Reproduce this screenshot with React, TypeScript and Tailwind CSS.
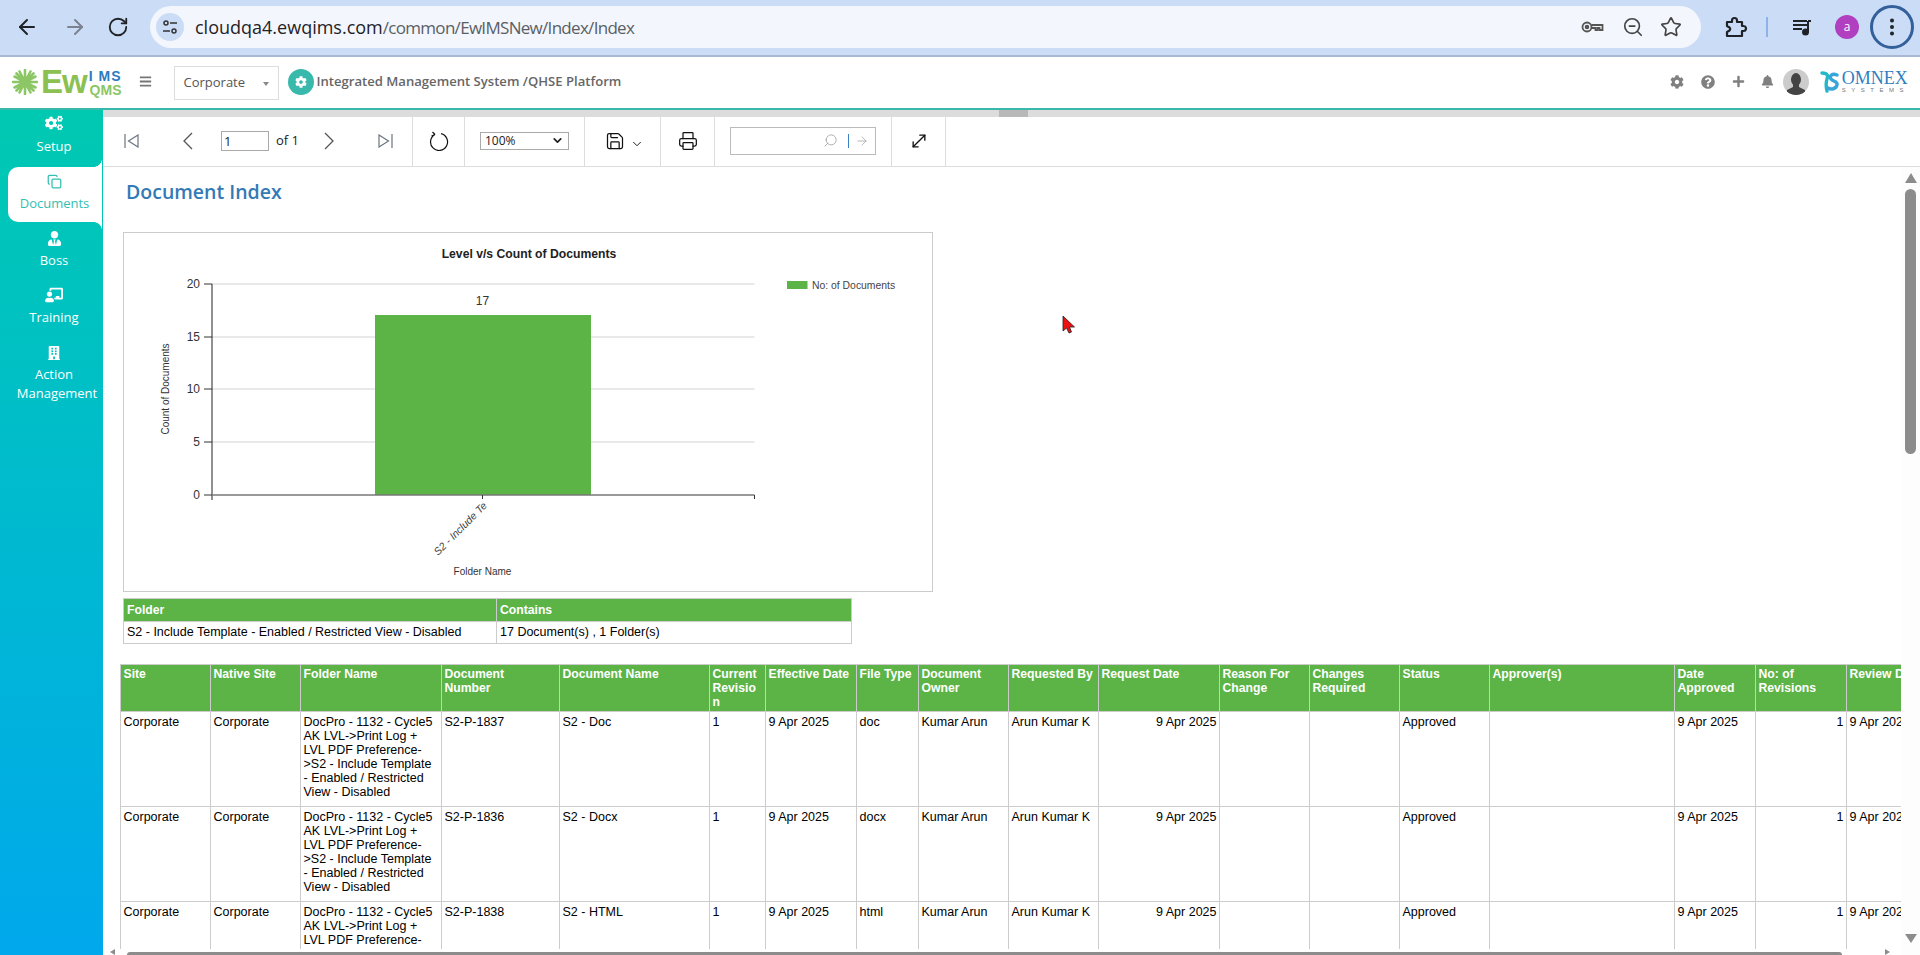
import { ArrowLeft, ArrowRight, ChevronDown, Copy, EllipsisVertical, MoveDiagonal, Printer, RotateCw, Save, Search, Star, ZoomOut } from "lucide-react";
import { FaBars, FaBell, FaBuilding, FaChalkboardTeacher, FaCog, FaCogs, FaPlus, FaQuestionCircle, FaUserTie } from "react-icons/fa";

const folderLines = ["DocPro - 1132 - Cycle5", "AK LVL->Print Log +", "LVL PDF Preference-", ">S2 - Include Template", "- Enabled / Restricted", "View - Disabled"];

const colWidths = [
  "w-[90px]", "w-[90px]", "w-[141px]", "w-[118px]", "w-[150px]", "w-[56px]", "w-[91px]", "w-[62px]", "w-[90px]",
  "w-[90px]", "w-[121px]", "w-[90px]", "w-[90px]", "w-[90px]", "w-[185px]", "w-[81px]", "w-[91px]", "w-[90px]",
];

const headers = [
  ["Site"], ["Native Site"], ["Folder Name"], ["Document", "Number"], ["Document Name"], ["Current", "Revisio", "n"],
  ["Effective Date"], ["File Type"], ["Document", "Owner"], ["Requested By"], ["Request Date"], ["Reason For", "Change"],
  ["Changes", "Required"], ["Status"], ["Approver(s)"], ["Date", "Approved"], ["No: of", "Revisions"], ["Review Date"],
];

const rows = [
  { number: "S2-P-1837", name: "S2 - Doc", type: "doc" },
  { number: "S2-P-1836", name: "S2 - Docx", type: "docx" },
  { number: "S2-P-1838", name: "S2 - HTML", type: "html" },
];

const td = "border border-[#cccccc] px-[2.5px] pt-[3px] align-top whitespace-nowrap overflow-hidden";

function NavItem({ icon, label, second }: { icon: React.ReactNode; label: string; second?: string }) {
  return (
    <div className={`flex h-[57px] flex-col items-center pl-[5px] pt-[6px] text-white ${second ? "mt-1" : ""}`}>
      <div className="flex h-5 items-center">{icon}</div>
      <div className={`text-center leading-[19px] ${second ? "mt-[5px]" : "mt-[3px]"}`}>
        {label}
        {second && <span className="block pl-1.5">{second}</span>}
      </div>
    </div>
  );
}

function Chart() {
  const grid = [284, 337, 389, 442];
  const ticks = [
    { y: 284, label: "20" },
    { y: 337, label: "15" },
    { y: 389, label: "10" },
    { y: 442, label: "5" },
    { y: 495, label: "0" },
  ];
  return (
    <svg viewBox="124 233 808 358" className="h-[358px] w-[808px]" fontFamily="'Liberation Sans', Arial, sans-serif">
      <text x="529" y="258" textAnchor="middle" fontSize="12.2" fontWeight="700" fill="#222">Level v/s Count of Documents</text>
      {grid.map((y) => (
        <line key={y} x1="212" x2="754.5" y1={y} y2={y} stroke="#e2e2e2" strokeWidth="1.4" />
      ))}
      <rect x="375" y="315" width="216" height="180" fill="#5cb346" />
      <line x1="212" x2="212" y1="284" y2="500" stroke="#222" />
      <line x1="212" x2="754.5" y1="495" y2="495" stroke="#777" strokeWidth="1.6" />
      {ticks.map((t) => (
        <g key={t.y}>
          <line x1="204" x2="212" y1={t.y} y2={t.y} stroke="#333" />
          <text x="200" y={t.y + 4} textAnchor="end" fontSize="12" fill="#333">{t.label}</text>
        </g>
      ))}
      <line x1="482.5" x2="482.5" y1="495" y2="499" stroke="#333" />
      <line x1="754.5" x2="754.5" y1="495" y2="499" stroke="#333" />
      <text x="482.5" y="305" textAnchor="middle" fontSize="12" fill="#333">17</text>
      <rect x="787" y="281" width="20.5" height="8" fill="#5cb346" />
      <text x="812" y="289" fontSize="10.4" fill="#444">No: of Documents</text>
      <text transform="translate(169 389) rotate(-90)" textAnchor="middle" fontSize="10" fill="#333">Count of Documents</text>
      <text transform="translate(438 556) rotate(-45)" fontSize="10.5" fontStyle="italic" fill="#444">S2 - Include Te</text>
      <text x="482.5" y="575" textAnchor="middle" fontSize="10" fill="#333">Folder Name</text>
    </svg>
  );
}

export default function App() {
  return (
    <div className="relative flex h-[955px] w-[1920px] flex-col overflow-hidden bg-white font-['Liberation_Sans',Arial,sans-serif]">
      {/* browser chrome */}
      <div className="flex h-[57px] shrink-0 items-start border-b-2 border-[#a9b8d0] bg-[#cbdcf6] pl-[15px] pt-[6px] text-[#1f2328]">
        <div className="flex h-[42px] items-center">
          <ArrowLeft size={24} strokeWidth={2} />
          <ArrowRight size={24} strokeWidth={2} className="ml-6 text-[#7b8391]" />
          <RotateCw size={22} strokeWidth={2} className="ml-[20px]" />
        </div>
        <div className="ml-[21px] flex h-[42px] w-[1551px] items-center rounded-full bg-[#f3f6fc] pl-[6px] pr-[19px]">
          <div className="flex h-7 w-7 items-center justify-center rounded-full bg-[#cbdcf6]">
            <svg width="16" height="16" viewBox="0 0 16 16" fill="none" stroke="#333" strokeWidth="1.5">
              <circle cx="4" cy="4" r="2" />
              <path d="M8 4h7M1 12h7" />
              <circle cx="12" cy="12" r="2" />
            </svg>
          </div>
          <div className="ml-[11px] font-['Open_Sans',sans-serif] text-[18px] text-[#5a5f66]">
            <span className="text-[#1f2328]">cloudqa4.ewqims.com</span>
            <span className="text-[17px] tracking-[-0.7px]">/common/EwIMSNew/Index/Index</span>
          </div>
          <div className="ml-auto flex items-center gap-4 text-[#444]">
            <svg width="24" height="24" viewBox="0 0 24 24" fill="none" stroke="#555" strokeWidth="1.8" className="mr-0.5">
              <circle cx="7" cy="12" r="4.5" />
              <circle cx="7" cy="12" r="1.4" fill="#555" />
              <path d="M11.5 10h11v5h-3v-2h-2v2h-2v-2h-4" />
            </svg>
            <ZoomOut size={22} strokeWidth={1.8} />
            <Star size={22} strokeWidth={1.8} />
          </div>
        </div>
        <div className="flex h-[42px] items-center">
          <svg width="24" height="24" viewBox="0 0 24 24" fill="none" stroke="#1f2328" strokeWidth="2.2" strokeLinejoin="round" className="ml-[22px]">
            <path d="M4 7h5V5.500a2.500 2.500 0 0 1 5 0V7h5v4h1.500a2.500 2.500 0 0 1 0 5H19v5H4v-4l2.500-1.500a2 2 0 0 0 0-3L4 11z" />
          </svg>
          <div className="ml-[19px] h-5 w-0.5 bg-[#8fb3e8]" />
          <svg width="24" height="24" viewBox="0 0 24 24" fill="none" stroke="#1f2328" strokeWidth="2" className="ml-[22px]">
            <path d="M3 6h14M3 10h14M3 14h9" />
            <path d="M18 6v11" />
            <path d="M18 6h3" />
            <circle cx="15.5" cy="17" r="2.5" fill="#1f2328" />
          </svg>
          <div className="ml-[21px] flex h-6 w-6 items-center justify-center rounded-full bg-[#b040c0] font-['Open_Sans',sans-serif] text-xs text-white">a</div>
          <div className="ml-[11px] flex h-11 w-11 items-center justify-center rounded-full border-[3px] border-[#33609b]">
            <EllipsisVertical size={22} strokeWidth={2.4} />
          </div>
        </div>
      </div>

      {/* app header */}
      <div className="flex h-[53px] shrink-0 items-center border-b-2 border-[#39b9ab] pb-0.5 pl-3 pr-[11px]">
        <svg width="26" height="26" viewBox="0 0 26 26" stroke="#8cc665" strokeWidth="2.6" strokeLinecap="round">
          <path d="M13 1v24M1 13h24M4.5 4.5l17 17M21.5 4.500l-17 17M7.500 2.500l11 21M18.500 2.500l-11 21M2.500 7.500l21 11M23.500 7.500l-21 11" />
        </svg>
        <div className="ml-[3px] flex items-end">
          <span className="text-[33px] font-bold leading-[30px] tracking-[-1px] text-[#8cc152]">Ew</span>
          <div className="ml-0.5 flex flex-col items-end">
            <span className="text-[14px] font-bold leading-[14px] tracking-[1px] text-[#2b7cc0]">I MS</span>
            <span className="text-[14px] font-bold leading-[14px] text-[#8cc665]">QMS</span>
          </div>
        </div>
        <FaBars size={13} className="ml-[18px] text-[#777]" />
        <div className="relative ml-[22px] mt-[3px] flex h-[34px] w-[105px] items-center border border-[#dddddd] pl-2 font-['Open_Sans',sans-serif] text-[13px] text-[#555]">
          Corporate
          <span className="absolute right-[9px] top-[15px] border-x-[3.5px] border-t-[4px] border-x-transparent border-t-[#888]" />
        </div>
        <div className="ml-[9px] flex h-[26px] w-[26px] items-center justify-center rounded-full bg-[#39b9ab]">
          <FaCog size={12} className="text-white" />
        </div>
        <div className="ml-0.5 font-['Open_Sans',sans-serif] text-[13.1px] font-semibold text-[#666]">Integrated Management System /QHSE Platform</div>
        <div className="ml-auto flex items-center text-[#808080]">
          <FaCog size={14} />
          <FaQuestionCircle size={14} className="ml-[17px]" />
          <FaPlus size={13} className="ml-[17px]" />
          <FaBell size={13} className="ml-4" />
          <div className="ml-[9px] flex h-[26px] w-[26px] items-end justify-center overflow-hidden rounded-full bg-[#cccccc]">
            <svg width="22" height="23" viewBox="0 0 22 23" fill="#444">
              <ellipse cx="11" cy="7.5" rx="5" ry="6.5" />
              <path d="M8 12h6v3l6 3v5H2v-5l6-3z" />
            </svg>
          </div>
          <div className="ml-2.5 flex items-center">
            <svg width="20" height="22" viewBox="0 0 20 22" fill="none" strokeWidth="3.4" strokeLinecap="round">
              <path d="M3 2c6 0 6 3 5 6s-1 8 0 12" stroke="#22b8c8" />
              <path d="M18 4c-5-2-8 1-6 4s7 2 6 6-6 5-9 3" stroke="#3aa5d8" />
            </svg>
            <div className="ml-[3px] flex flex-col items-start font-['Liberation_Serif',serif]">
              <span className="text-[18px] leading-[16px] text-[#2f7fc1]">OMNEX</span>
              <span className="font-['Liberation_Sans',sans-serif] text-[6px] leading-[8px] tracking-[5.5px] text-[#777]">SYSTEMS</span>
            </div>
          </div>
        </div>
      </div>

      <div className="flex min-h-0 flex-1">
        {/* sidebar */}
        <aside className="w-[103px] shrink-0 bg-gradient-to-b from-[#00c9b1] to-[#00a8ec] font-['Open_Sans',sans-serif] text-[13px]">
          <div className="flex h-[57px] flex-col items-center pl-[5px] pt-[3px] text-white">
            <div className="flex h-5 items-center"><FaCogs size={18} /></div>
            <div className="mt-1 leading-[19px]">Setup</div>
          </div>
          <div className="relative ml-2 mr-px flex h-[55px] flex-col items-center rounded-l-[10px] bg-white pr-px pt-1 text-[#33c0b0]">
            <span className="absolute -top-2 right-0 h-2 w-2 bg-[radial-gradient(circle_at_0_0,transparent_7.5px,white_8px)]" />
            <span className="absolute -bottom-2 right-0 h-2 w-2 bg-[radial-gradient(circle_at_0_100%,transparent_7.5px,white_8px)]" />
            <div className="flex h-5 items-center"><Copy size={15} /></div>
            <div className="mt-[3px] leading-[19px]">Documents</div>
          </div>
          <NavItem icon={<FaUserTie size={15} />} label="Boss" />
          <NavItem icon={<FaChalkboardTeacher size={18} />} label="Training" />
          <NavItem icon={<FaBuilding size={14} />} label="Action" second="Management" />
        </aside>

        <main className="flex min-w-0 flex-1 flex-col">
          <div className="relative h-[7px] shrink-0 bg-[#dcdcdc]">
            <div className="absolute left-[896px] top-0 h-[7px] w-[29px] bg-[#b8b8b8]" />
          </div>

          {/* report toolbar */}
          <div className="flex h-[50px] shrink-0 border-b border-[#dddddd] font-['Open_Sans',sans-serif] text-[13px] text-[#222]">
            <div className="flex w-[310px] items-center border-r border-[#dddddd] pb-0.5 pl-[21px]">
              <svg width="15" height="14" viewBox="0 0 15 14" fill="none" stroke="#6b7480" strokeWidth="1.2">
                <path d="M1 0v14M14 1v12L4.500 7z" />
              </svg>
              <svg width="11" height="18" viewBox="0 0 11 18" fill="none" stroke="#555" strokeWidth="1.3" className="ml-[43px]">
                <path d="M10 1 2 9l8 8" />
              </svg>
              <input readOnly value="1" className="ml-7 h-5 w-12 border border-[#aaaaaa] pl-0.5 text-[13px] leading-none outline-none" />
              <span className="ml-[7px]">of 1</span>
              <svg width="11" height="18" viewBox="0 0 11 18" fill="none" stroke="#555" strokeWidth="1.3" className="ml-[25px]">
                <path d="m1 1 8 8-8 8" />
              </svg>
              <svg width="15" height="14" viewBox="0 0 15 14" fill="none" stroke="#6b7480" strokeWidth="1.2" className="ml-[43px]">
                <path d="M14 0v14M1 1v12l9.500-6z" />
              </svg>
            </div>
            <div className="flex w-[52px] items-center justify-center border-r border-[#dddddd] pb-0.5">
              <svg width="20" height="20" viewBox="0 0 20 20" fill="none" stroke="#111" strokeWidth="1.2">
                <path d="M6 3.500a8.500 8.500 0 1 0 6-.8M6 3.500 3.500 1M6 3.500l-3.500 1.500" />
              </svg>
            </div>
            <div className="flex w-[120px] items-center border-r border-[#dddddd] pb-0.5 pl-[15px]">
              <div className="flex h-[18px] w-[89px] items-center justify-between border border-[#aaaaaa] px-1 text-xs">
                100%
                <ChevronDown size={13} strokeWidth={3.2} />
              </div>
            </div>
            <div className="flex w-[76px] items-center border-r border-[#dddddd] pb-0.5 pl-5">
              <Save size={20} strokeWidth={1.5} className="text-[#111]" />
              <ChevronDown size={14} strokeWidth={1.6} className="ml-[5px] mt-1.5 text-[#111]" />
            </div>
            <div className="flex w-[54px] items-center justify-center border-r border-[#dddddd] pb-0.5">
              <Printer size={20} strokeWidth={1.5} className="text-[#111]" />
            </div>
            <div className="flex w-[177px] items-center border-r border-[#dddddd] pb-0.5 pl-[15px]">
              <div className="flex h-7 w-[146px] items-center justify-end border border-[#bbbbbb] pr-1.5">
                <Search size={15} strokeWidth={1.2} className="-scale-x-100 text-[#999]" />
                <div className="ml-[10px] h-3.5 w-px bg-[#3b82c4]" />
                <ArrowRight size={14} strokeWidth={1.2} className="ml-1.5 text-[#999]" />
              </div>
            </div>
            <div className="flex w-[54px] items-center justify-center border-r border-[#dddddd] pb-0.5">
              <MoveDiagonal size={20} strokeWidth={1.6} className="text-[#111]" />
            </div>
          </div>

          {/* report body */}
          <div className="flex min-h-0 flex-1">
            <div className="flex min-w-0 flex-1 flex-col">
              <div className="min-h-0 flex-1 overflow-hidden text-[12.5px] leading-[14px] text-black">
                <h1 className="ml-[23px] mt-[11px] font-['Open_Sans',sans-serif] text-[19.5px] font-semibold leading-[28px] text-[#337ab7]">Document Index</h1>
                <div className="ml-5 mt-[26px] h-[360px] w-[810px] border border-[#cccccc]">
                  <Chart />
                </div>
                <table className="ml-5 mt-[6px] w-[728px] table-fixed border-collapse">
                  <colgroup>
                    <col className="w-[373px]" />
                    <col className="w-[355px]" />
                  </colgroup>
                  <thead>
                    <tr className="h-[23px] bg-[#5cb346] text-left text-white">
                      <th className="border border-[#cccccc] px-[3px] text-[12.2px] font-bold">Folder</th>
                      <th className="border border-[#cccccc] px-[3px] text-[12.2px] font-bold">Contains</th>
                    </tr>
                  </thead>
                  <tbody>
                    <tr className="h-[22px]">
                      <td className="border border-[#cccccc] px-[3px] pb-0.5">S2 - Include Template - Enabled / Restricted View - Disabled</td>
                      <td className="border border-[#cccccc] px-[3px] pb-0.5">17 Document(s) , 1 Folder(s)</td>
                    </tr>
                  </tbody>
                </table>
                <table className="ml-[17px] mt-5 w-[1816px] table-fixed border-collapse">
                  <colgroup>
                    {colWidths.map((w, i) => (
                      <col key={i} className={w} />
                    ))}
                  </colgroup>
                  <thead>
                    <tr className="h-[47px] bg-[#5cb346] text-left text-white">
                      {headers.map((lines, i) => (
                        <th key={i} className="overflow-hidden whitespace-nowrap border border-[#cccccc] px-[2.5px] pt-0.5 align-top text-[12.2px] font-bold">
                          {lines.map((l) => (
                            <div key={l}>{l}</div>
                          ))}
                        </th>
                      ))}
                    </tr>
                  </thead>
                  <tbody>
                    {rows.map((r) => (
                      <tr key={r.number} className="h-[95px]">
                        <td className={td}>Corporate</td>
                        <td className={td}>Corporate</td>
                        <td className={td}>
                          {folderLines.map((l) => (
                            <div key={l}>{l}</div>
                          ))}
                        </td>
                        <td className={td}>{r.number}</td>
                        <td className={td}>{r.name}</td>
                        <td className={td}>1</td>
                        <td className={td}>9 Apr 2025</td>
                        <td className={td}>{r.type}</td>
                        <td className={td}>Kumar Arun</td>
                        <td className={td}>Arun Kumar K</td>
                        <td className={`${td} text-right`}>9 Apr 2025</td>
                        <td className={td} />
                        <td className={td} />
                        <td className={td}>Approved</td>
                        <td className={td} />
                        <td className={td}>9 Apr 2025</td>
                        <td className={`${td} text-right`}>1</td>
                        <td className={td}>9 Apr 2025</td>
                      </tr>
                    ))}
                  </tbody>
                </table>
              </div>
              {/* horizontal scrollbar */}
              <div className="flex h-[6px] shrink-0 items-end">
                <div className="ml-[7px] h-0 w-0 border-y-[3px] border-r-[5px] border-y-transparent border-r-[#8c8c8c]" />
                <div className="ml-3 h-[3px] w-[1715px] rounded-t-sm bg-[#8c8c8c]" />
                <div className="ml-[43px] h-0 w-0 border-y-[3px] border-l-[5px] border-y-transparent border-l-[#8c8c8c]" />
              </div>
            </div>
            {/* vertical scrollbar */}
            <div className="flex w-[19px] shrink-0 flex-col items-center bg-[#fdfdfd] px-[3px] pt-[6px]">
              <div className="h-0 w-0 border-x-[6.5px] border-b-[10px] border-x-transparent border-b-[#8c8c8c]" />
              <div className="mt-[6px] h-[265px] w-[11px] rounded-full bg-[#8c8c8c]" />
              <div className="mb-[12px] mt-auto h-0 w-0 border-x-[6.5px] border-t-[9px] border-x-transparent border-t-[#8c8c8c]" />
            </div>
          </div>
        </main>
      </div>

      {/* screen recorder cursor */}
      <svg width="14" height="20" viewBox="0 0 14 20" className="pointer-events-none absolute left-[1062px] top-[315px]">
        <path d="M1 1v15l3.500-3 2.500 5 2.500-1-2-5h5z" fill="#ee1111" stroke="#222" strokeWidth="0.8" />
      </svg>
    </div>
  );
}
